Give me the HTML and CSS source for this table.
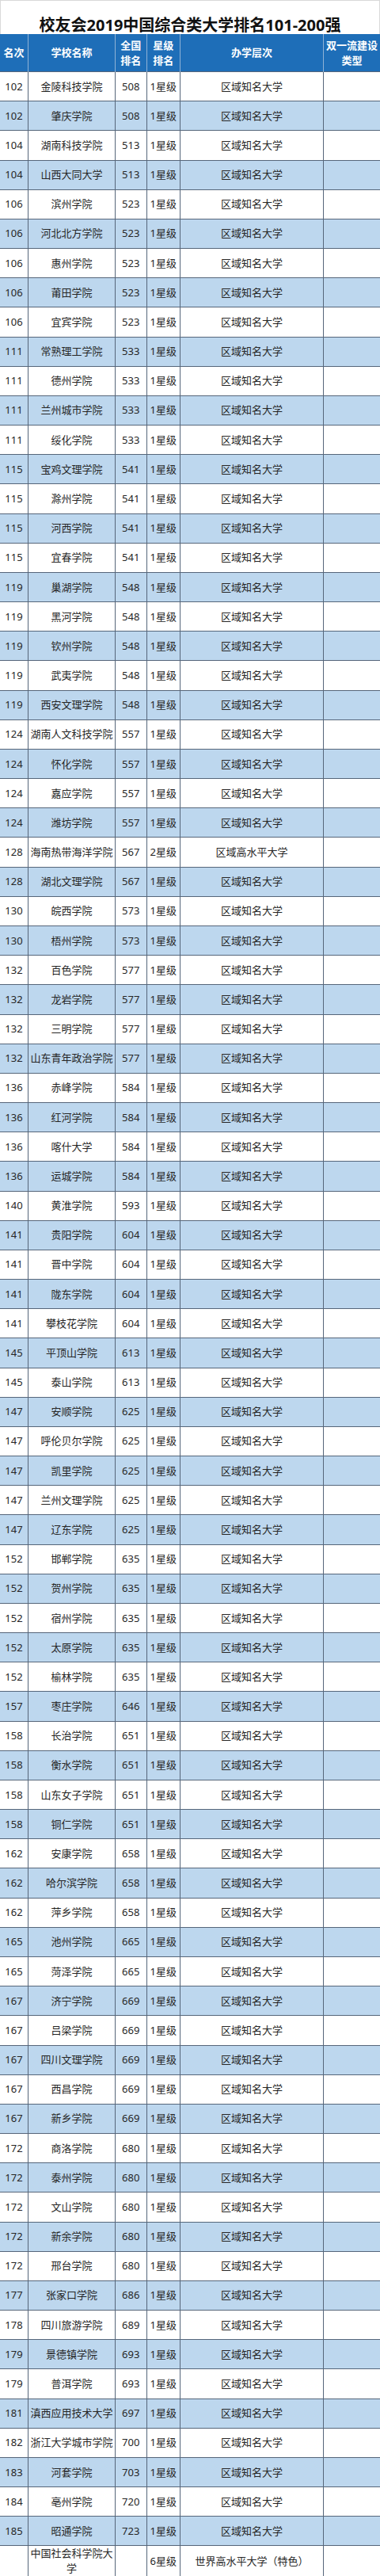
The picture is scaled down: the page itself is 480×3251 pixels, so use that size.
FILE: index.html
```html
<!DOCTYPE html>
<html lang="zh-CN">
<head>
<meta charset="utf-8">
<title>校友会2019中国综合类大学排名101-200强</title>
<link rel="stylesheet" href="styles.css">
</head>
<body>
<div class="page">
  <div class="title">校友会2019中国综合类大学排名101-200强</div>
  <table class="rank">
    <colgroup>
      <col class="c-rank"><col class="c-name"><col class="c-nat"><col class="c-star"><col class="c-level"><col class="c-type">
    </colgroup>
    <thead>
      <tr><th>名次</th><th>学校名称</th><th>全国<br>排名</th><th>星级<br>排名</th><th>办学层次</th><th>双一流建设<br>类型</th></tr>
    </thead>
    <tbody>
      <tr><td>102</td><td>金陵科技学院</td><td>508</td><td>1星级</td><td>区域知名大学</td><td></td></tr>
      <tr><td>102</td><td>肇庆学院</td><td>508</td><td>1星级</td><td>区域知名大学</td><td></td></tr>
      <tr><td>104</td><td>湖南科技学院</td><td>513</td><td>1星级</td><td>区域知名大学</td><td></td></tr>
      <tr><td>104</td><td>山西大同大学</td><td>513</td><td>1星级</td><td>区域知名大学</td><td></td></tr>
      <tr><td>106</td><td>滨州学院</td><td>523</td><td>1星级</td><td>区域知名大学</td><td></td></tr>
      <tr><td>106</td><td>河北北方学院</td><td>523</td><td>1星级</td><td>区域知名大学</td><td></td></tr>
      <tr><td>106</td><td>惠州学院</td><td>523</td><td>1星级</td><td>区域知名大学</td><td></td></tr>
      <tr><td>106</td><td>莆田学院</td><td>523</td><td>1星级</td><td>区域知名大学</td><td></td></tr>
      <tr><td>106</td><td>宜宾学院</td><td>523</td><td>1星级</td><td>区域知名大学</td><td></td></tr>
      <tr><td>111</td><td>常熟理工学院</td><td>533</td><td>1星级</td><td>区域知名大学</td><td></td></tr>
      <tr><td>111</td><td>德州学院</td><td>533</td><td>1星级</td><td>区域知名大学</td><td></td></tr>
      <tr><td>111</td><td>兰州城市学院</td><td>533</td><td>1星级</td><td>区域知名大学</td><td></td></tr>
      <tr><td>111</td><td>绥化学院</td><td>533</td><td>1星级</td><td>区域知名大学</td><td></td></tr>
      <tr><td>115</td><td>宝鸡文理学院</td><td>541</td><td>1星级</td><td>区域知名大学</td><td></td></tr>
      <tr><td>115</td><td>滁州学院</td><td>541</td><td>1星级</td><td>区域知名大学</td><td></td></tr>
      <tr><td>115</td><td>河西学院</td><td>541</td><td>1星级</td><td>区域知名大学</td><td></td></tr>
      <tr><td>115</td><td>宜春学院</td><td>541</td><td>1星级</td><td>区域知名大学</td><td></td></tr>
      <tr><td>119</td><td>巢湖学院</td><td>548</td><td>1星级</td><td>区域知名大学</td><td></td></tr>
      <tr><td>119</td><td>黑河学院</td><td>548</td><td>1星级</td><td>区域知名大学</td><td></td></tr>
      <tr><td>119</td><td>钦州学院</td><td>548</td><td>1星级</td><td>区域知名大学</td><td></td></tr>
      <tr><td>119</td><td>武夷学院</td><td>548</td><td>1星级</td><td>区域知名大学</td><td></td></tr>
      <tr><td>119</td><td>西安文理学院</td><td>548</td><td>1星级</td><td>区域知名大学</td><td></td></tr>
      <tr><td>124</td><td>湖南人文科技学院</td><td>557</td><td>1星级</td><td>区域知名大学</td><td></td></tr>
      <tr><td>124</td><td>怀化学院</td><td>557</td><td>1星级</td><td>区域知名大学</td><td></td></tr>
      <tr><td>124</td><td>嘉应学院</td><td>557</td><td>1星级</td><td>区域知名大学</td><td></td></tr>
      <tr><td>124</td><td>潍坊学院</td><td>557</td><td>1星级</td><td>区域知名大学</td><td></td></tr>
      <tr><td>128</td><td>海南热带海洋学院</td><td>567</td><td>2星级</td><td>区域高水平大学</td><td></td></tr>
      <tr><td>128</td><td>湖北文理学院</td><td>567</td><td>1星级</td><td>区域知名大学</td><td></td></tr>
      <tr><td>130</td><td>皖西学院</td><td>573</td><td>1星级</td><td>区域知名大学</td><td></td></tr>
      <tr><td>130</td><td>梧州学院</td><td>573</td><td>1星级</td><td>区域知名大学</td><td></td></tr>
      <tr><td>132</td><td>百色学院</td><td>577</td><td>1星级</td><td>区域知名大学</td><td></td></tr>
      <tr><td>132</td><td>龙岩学院</td><td>577</td><td>1星级</td><td>区域知名大学</td><td></td></tr>
      <tr><td>132</td><td>三明学院</td><td>577</td><td>1星级</td><td>区域知名大学</td><td></td></tr>
      <tr><td>132</td><td>山东青年政治学院</td><td>577</td><td>1星级</td><td>区域知名大学</td><td></td></tr>
      <tr><td>136</td><td>赤峰学院</td><td>584</td><td>1星级</td><td>区域知名大学</td><td></td></tr>
      <tr><td>136</td><td>红河学院</td><td>584</td><td>1星级</td><td>区域知名大学</td><td></td></tr>
      <tr><td>136</td><td>喀什大学</td><td>584</td><td>1星级</td><td>区域知名大学</td><td></td></tr>
      <tr><td>136</td><td>运城学院</td><td>584</td><td>1星级</td><td>区域知名大学</td><td></td></tr>
      <tr><td>140</td><td>黄淮学院</td><td>593</td><td>1星级</td><td>区域知名大学</td><td></td></tr>
      <tr><td>141</td><td>贵阳学院</td><td>604</td><td>1星级</td><td>区域知名大学</td><td></td></tr>
      <tr><td>141</td><td>晋中学院</td><td>604</td><td>1星级</td><td>区域知名大学</td><td></td></tr>
      <tr><td>141</td><td>陇东学院</td><td>604</td><td>1星级</td><td>区域知名大学</td><td></td></tr>
      <tr><td>141</td><td>攀枝花学院</td><td>604</td><td>1星级</td><td>区域知名大学</td><td></td></tr>
      <tr><td>145</td><td>平顶山学院</td><td>613</td><td>1星级</td><td>区域知名大学</td><td></td></tr>
      <tr><td>145</td><td>泰山学院</td><td>613</td><td>1星级</td><td>区域知名大学</td><td></td></tr>
      <tr><td>147</td><td>安顺学院</td><td>625</td><td>1星级</td><td>区域知名大学</td><td></td></tr>
      <tr><td>147</td><td>呼伦贝尔学院</td><td>625</td><td>1星级</td><td>区域知名大学</td><td></td></tr>
      <tr><td>147</td><td>凯里学院</td><td>625</td><td>1星级</td><td>区域知名大学</td><td></td></tr>
      <tr><td>147</td><td>兰州文理学院</td><td>625</td><td>1星级</td><td>区域知名大学</td><td></td></tr>
      <tr><td>147</td><td>辽东学院</td><td>625</td><td>1星级</td><td>区域知名大学</td><td></td></tr>
      <tr><td>152</td><td>邯郸学院</td><td>635</td><td>1星级</td><td>区域知名大学</td><td></td></tr>
      <tr><td>152</td><td>贺州学院</td><td>635</td><td>1星级</td><td>区域知名大学</td><td></td></tr>
      <tr><td>152</td><td>宿州学院</td><td>635</td><td>1星级</td><td>区域知名大学</td><td></td></tr>
      <tr><td>152</td><td>太原学院</td><td>635</td><td>1星级</td><td>区域知名大学</td><td></td></tr>
      <tr><td>152</td><td>榆林学院</td><td>635</td><td>1星级</td><td>区域知名大学</td><td></td></tr>
      <tr><td>157</td><td>枣庄学院</td><td>646</td><td>1星级</td><td>区域知名大学</td><td></td></tr>
      <tr><td>158</td><td>长治学院</td><td>651</td><td>1星级</td><td>区域知名大学</td><td></td></tr>
      <tr><td>158</td><td>衡水学院</td><td>651</td><td>1星级</td><td>区域知名大学</td><td></td></tr>
      <tr><td>158</td><td>山东女子学院</td><td>651</td><td>1星级</td><td>区域知名大学</td><td></td></tr>
      <tr><td>158</td><td>铜仁学院</td><td>651</td><td>1星级</td><td>区域知名大学</td><td></td></tr>
      <tr><td>162</td><td>安康学院</td><td>658</td><td>1星级</td><td>区域知名大学</td><td></td></tr>
      <tr><td>162</td><td>哈尔滨学院</td><td>658</td><td>1星级</td><td>区域知名大学</td><td></td></tr>
      <tr><td>162</td><td>萍乡学院</td><td>658</td><td>1星级</td><td>区域知名大学</td><td></td></tr>
      <tr><td>165</td><td>池州学院</td><td>665</td><td>1星级</td><td>区域知名大学</td><td></td></tr>
      <tr><td>165</td><td>菏泽学院</td><td>665</td><td>1星级</td><td>区域知名大学</td><td></td></tr>
      <tr><td>167</td><td>济宁学院</td><td>669</td><td>1星级</td><td>区域知名大学</td><td></td></tr>
      <tr><td>167</td><td>吕梁学院</td><td>669</td><td>1星级</td><td>区域知名大学</td><td></td></tr>
      <tr><td>167</td><td>四川文理学院</td><td>669</td><td>1星级</td><td>区域知名大学</td><td></td></tr>
      <tr><td>167</td><td>西昌学院</td><td>669</td><td>1星级</td><td>区域知名大学</td><td></td></tr>
      <tr><td>167</td><td>新乡学院</td><td>669</td><td>1星级</td><td>区域知名大学</td><td></td></tr>
      <tr><td>172</td><td>商洛学院</td><td>680</td><td>1星级</td><td>区域知名大学</td><td></td></tr>
      <tr><td>172</td><td>泰州学院</td><td>680</td><td>1星级</td><td>区域知名大学</td><td></td></tr>
      <tr><td>172</td><td>文山学院</td><td>680</td><td>1星级</td><td>区域知名大学</td><td></td></tr>
      <tr><td>172</td><td>新余学院</td><td>680</td><td>1星级</td><td>区域知名大学</td><td></td></tr>
      <tr><td>172</td><td>邢台学院</td><td>680</td><td>1星级</td><td>区域知名大学</td><td></td></tr>
      <tr><td>177</td><td>张家口学院</td><td>686</td><td>1星级</td><td>区域知名大学</td><td></td></tr>
      <tr><td>178</td><td>四川旅游学院</td><td>689</td><td>1星级</td><td>区域知名大学</td><td></td></tr>
      <tr><td>179</td><td>景德镇学院</td><td>693</td><td>1星级</td><td>区域知名大学</td><td></td></tr>
      <tr><td>179</td><td>普洱学院</td><td>693</td><td>1星级</td><td>区域知名大学</td><td></td></tr>
      <tr><td>181</td><td>滇西应用技术大学</td><td>697</td><td>1星级</td><td>区域知名大学</td><td></td></tr>
      <tr><td>182</td><td>浙江大学城市学院</td><td>700</td><td>1星级</td><td>区域知名大学</td><td></td></tr>
      <tr><td>183</td><td>河套学院</td><td>703</td><td>1星级</td><td>区域知名大学</td><td></td></tr>
      <tr><td>184</td><td>亳州学院</td><td>720</td><td>1星级</td><td>区域知名大学</td><td></td></tr>
      <tr><td>185</td><td>昭通学院</td><td>723</td><td>1星级</td><td>区域知名大学</td><td></td></tr>
      <tr><td></td><td>中国社会科学院大学</td><td></td><td>6星级</td><td>世界高水平大学（特色）</td><td></td></tr>
    </tbody>
  </table>
</div>
</body>
</html>
```
FILE: styles.css
```css
html, body {
  margin: 0;
  padding: 0;
  background: #ffffff;
}

.page {
  width: 480px;
  font-family: "Noto Sans", "Noto Sans CJK SC", sans-serif;
  color: #262626;
}

.title {
  box-sizing: border-box;
  height: 43px;
  padding-top: 19px;
  font-size: 20px;
  line-height: 24px;
  font-weight: bold;
  text-align: center;
  color: #111111;
  border: 1px solid #d9d9d9;
  border-bottom: none;
}

.rank {
  width: 480px;
  table-layout: fixed;
  border-collapse: collapse;
  font-size: 13px;
  line-height: 19px;
}

.c-rank { width: 35.5px; }
.c-name { width: 110px; }
.c-nat { width: 39.5px; }
.c-star { width: 42.5px; }
.c-level { width: 181px; }
.c-type { width: 71.5px; }

.rank th {
  height: 47px;
  padding: 0 1px;
  background: #1e6eb8;
  color: #ffffff;
  font-weight: bold;
  text-align: center;
  vertical-align: middle;
  border-left: 1px solid #8fb2d6;
  border-right: 1px solid #8fb2d6;
}

.rank th:first-child { border-left: none; }
.rank th:last-child { border-right: none; }

.rank tbody tr {
  height: 37.18px;
}

.rank tbody tr:nth-child(even) {
  background: #bdd7ee;
}

.rank td {
  padding: 0 1px;
  text-align: center;
  vertical-align: middle;
  white-space: normal;
  border: 1px solid #56667a;
}

.rank td:first-child { border-left: none; }
.rank td:last-child { border-right: none; }
```
